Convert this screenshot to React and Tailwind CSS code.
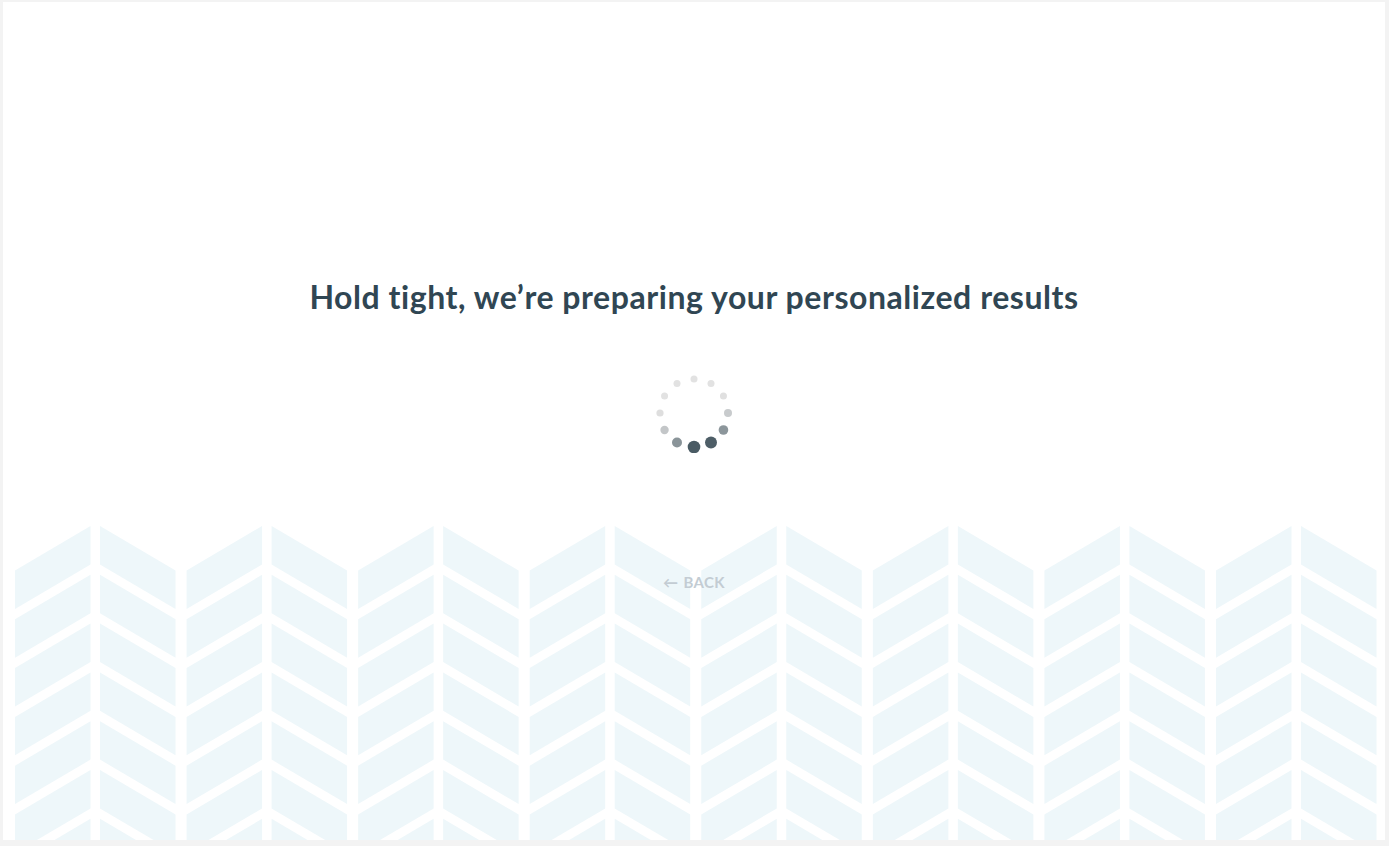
import React from 'react'

// spinner dots, clockwise from 12 o'clock: radius and fill
const DOTS = [
  { r: 3.5, fill: '#e2e2e2' },
  { r: 3.5, fill: '#e2e2e2' },
  { r: 3.5, fill: '#e0e0e0' },
  { r: 4, fill: '#c8cbcd' },
  { r: 4.8, fill: '#8c969b' },
  { r: 6, fill: '#4e5e67' },
  { r: 6.3, fill: '#4a5b64' },
  { r: 5, fill: '#8a9499' },
  { r: 4.2, fill: '#c3c6c8' },
  { r: 3.6, fill: '#dedede' },
  { r: 3.5, fill: '#e2e2e2' },
  { r: 3.5, fill: '#e2e2e2' },
]

function Spinner() {
  return (
    <svg width="80" height="80" viewBox="0 0 80 80">
      {DOTS.map((d, i) => {
        const a = (i / 12) * Math.PI * 2
        return (
          <circle
            key={i}
            cx={40 + Math.sin(a) * 34}
            cy={40 - Math.cos(a) * 34}
            r={d.r}
            fill={d.fill}
          />
        )
      })}
    </svg>
  )
}

// chevron backdrop: pairs of columns with slanted bands meeting in a ^
const PERIOD = 171.57
const COL_W = 75.5
const B_OFFSET = 85
const RISE = 44.5
const BAND = 38.4
const STEP = 48.8
const HEIGHT = 314

function Chevrons() {
  const shapes = []
  for (let n = 0; n < 8; n++) {
    const ax = 12 + n * PERIOD
    const bx = ax + B_OFFSET
    for (let k = 0; k < 7; k++) {
      const low = RISE + k * STEP
      const high = k * STEP
      // left column rises to the right
      shapes.push(
        <polygon
          key={`a${n}-${k}`}
          points={`${ax},${low} ${ax + COL_W},${high} ${ax + COL_W},${high + BAND} ${ax},${low + BAND}`}
        />
      )
      // right column falls to the right
      shapes.push(
        <polygon
          key={`b${n}-${k}`}
          points={`${bx},${high} ${bx + COL_W},${low} ${bx + COL_W},${low + BAND} ${bx},${high + BAND}`}
        />
      )
    }
  }
  return (
    <svg className="absolute inset-0" width="100%" height={HEIGHT} fill="#eef7fa">
      {shapes}
    </svg>
  )
}

export default function App() {
  return (
    <div className="min-h-screen bg-[#f3f3f3] pt-[2px] pl-[3px] pr-[4px] pb-[6px]">
      <div className="bg-white flex flex-col items-center" style={{ fontFamily: 'Lato, "Open Sans", sans-serif' }}>
        <h1 className="mt-[275px] text-[32px] leading-[40px] font-bold text-[#304653] tracking-[0.55px]">
          Hold tight, we’re preparing your personalized results
        </h1>

        <div className="mt-[56px]">
          <Spinner />
        </div>

        <div className="relative mt-[73px] w-full h-[314px] overflow-hidden">
          <Chevrons />
          <div className="relative flex justify-center pt-[46px]">
            <a href="#" className="flex items-center gap-[5px] text-[15px] leading-[20px] font-bold tracking-[0.4px] text-[#c3ccd3]">
              <span className="text-[15px]">←</span>
              <span>BACK</span>
            </a>
          </div>
        </div>
      </div>
    </div>
  )
}
